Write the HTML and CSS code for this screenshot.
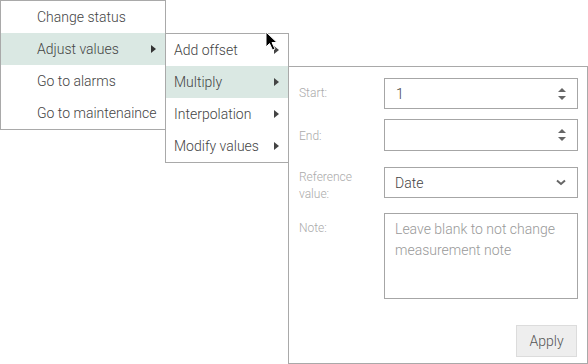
FILE: index.html
```html
<!DOCTYPE html>
<html>
<head>
<meta charset="utf-8">
<link rel="stylesheet" href="styles.css">
</head>
<body>
<div class="menu root">
  <div class="item">Change status</div>
  <div class="item active">
    <span>Adjust values</span><span class="caret"></span>
    <div class="menu sub">
      <div class="item"><span>Add offset</span><span class="caret"></span></div>
      <div class="item active">
        <span>Multiply</span><span class="caret"></span>
        <div class="panel">
          <div class="row r1">
            <label class="lbl">Start:</label>
            <div class="field"><span class="val">1</span><span class="spin"><i class="up"></i><i class="down"></i></span></div>
          </div>
          <div class="row r2">
            <label class="lbl">End:</label>
            <div class="field"><span class="val"></span><span class="spin"><i class="up"></i><i class="down"></i></span></div>
          </div>
          <div class="row r3">
            <label class="lbl two">Reference value:</label>
            <div class="field select"><span class="val">Date</span>
              <svg class="chev" width="10" height="7" viewBox="0 0 10 7"><polyline points="1,1.5 5,5 9,1.5" fill="none" stroke="#666" stroke-width="2"/></svg>
            </div>
          </div>
          <div class="row r4">
            <label class="lbl">Note:</label>
            <div class="field area"><span class="ph">Leave blank to not change measurement note</span></div>
          </div>
          <div class="actions"><button class="btn">Apply</button></div>
        </div>
      </div>
      <div class="item"><span>Interpolation</span><span class="caret"></span></div>
      <div class="item"><span>Modify values</span><span class="caret"></span></div>
    </div>
  </div>
  <div class="item">Go to alarms</div>
  <div class="item">Go to maintenaince</div>
</div>
<svg class="cursor" width="14" height="22" viewBox="0 0 14 22">
  <path d="M1,1 L1,16 L4.5,12.5 L7.5,19 L10,18 L7,11.5 L12,11.5 Z" fill="#000" stroke="#fff" stroke-width="1" stroke-linejoin="round"/>
</svg>
</body>
</html>
```
FILE: styles.css
```css
html, body {
  margin: 0;
  padding: 0;
  background: #fff;
  font-family: Roboto, "Liberation Sans", sans-serif;
  font-weight: 300;
}
body {
  position: relative;
  width: 588px;
  height: 364px;
  overflow: hidden;
}
.menu {
  background: #fff;
  border: 1px solid #a9a9a9;
}
.root {
  width: 164px;
  position: relative;
}
.item {
  position: relative;
  height: 32px;
  line-height: 32px;
  font-size: 14px;
  color: #444;
  display: flex;
  align-items: center;
  justify-content: space-between;
  padding-right: 9px;
  white-space: nowrap;
}
.root > .item {
  padding-left: 36px;
}
.item.active {
  background: #dae8e3;
}
.caret {
  width: 0;
  height: 0;
  border-left: 5px solid #333;
  border-top: 4px solid transparent;
  border-bottom: 4px solid transparent;
}
.sub {
  position: absolute;
  left: 100%;
  top: 0;
  width: 122px;
  z-index: 2;
}
.sub > .item {
  padding-left: 8px;
}
.sub .caret {
  border-left-color: #444;
}
.panel {
  position: absolute;
  left: 100%;
  top: 0;
  width: 300px;
  height: 298px;
  box-sizing: border-box;
  background: #fff;
  border: 1px solid #a9a9a9;
  padding: 11px 9px 0 10px;
  display: flex;
  flex-direction: column;
  line-height: normal;
  white-space: normal;
  cursor: default;
}
.row {
  display: flex;
  align-items: flex-start;
}
.r2 { margin-top: 10px; }
.r3 { margin-top: 16px; }
.r4 { margin-top: 10px; }
.lbl {
  width: 85px;
  flex: none;
  font-size: 12px;
  line-height: 17px;
  color: #aaa;
  padding-top: 7px;
}
.r2 .field { height: 32px; }
.r2 .lbl { padding-top: 9px; }
.lbl.two {
  padding-top: 2px;
  width: 70px;
  margin-right: 15px;
}
.field {
  flex: 1;
  height: 31px;
  box-sizing: border-box;
  border: 1px solid #a6a6a6;
  display: flex;
  align-items: center;
  justify-content: space-between;
  padding: 0 11px 0 11px;
  font-size: 14px;
  color: #444;
}
.select {
  height: 31px;
  padding-left: 10px;
}
.spin {
  display: flex;
  flex-direction: column;
  gap: 4px;
}
.spin i {
  display: block;
  width: 0;
  height: 0;
  border-left: 4px solid transparent;
  border-right: 4px solid transparent;
}
.spin .up { border-bottom: 4px solid #666; }
.spin .down { border-top: 4px solid #666; }
.area {
  height: 86px;
  align-items: flex-start;
  padding: 5px 10px;
}
.ph {
  color: #999;
  line-height: 21px;
  font-size: 14px;
}
.actions {
  display: flex;
  justify-content: flex-end;
  margin-top: 26px;
  padding-right: 1px;
}
.btn {
  width: 61px;
  height: 32px;
  background: #eeeeee;
  border: 1px solid #dcdcdc;
  font-family: Roboto, "Liberation Sans", sans-serif;
  font-weight: 300;
  font-size: 14px;
  color: #555;
  padding: 0;
}
.cursor {
  position: absolute;
  left: 265px;
  top: 31px;
  z-index: 10;
}
```
